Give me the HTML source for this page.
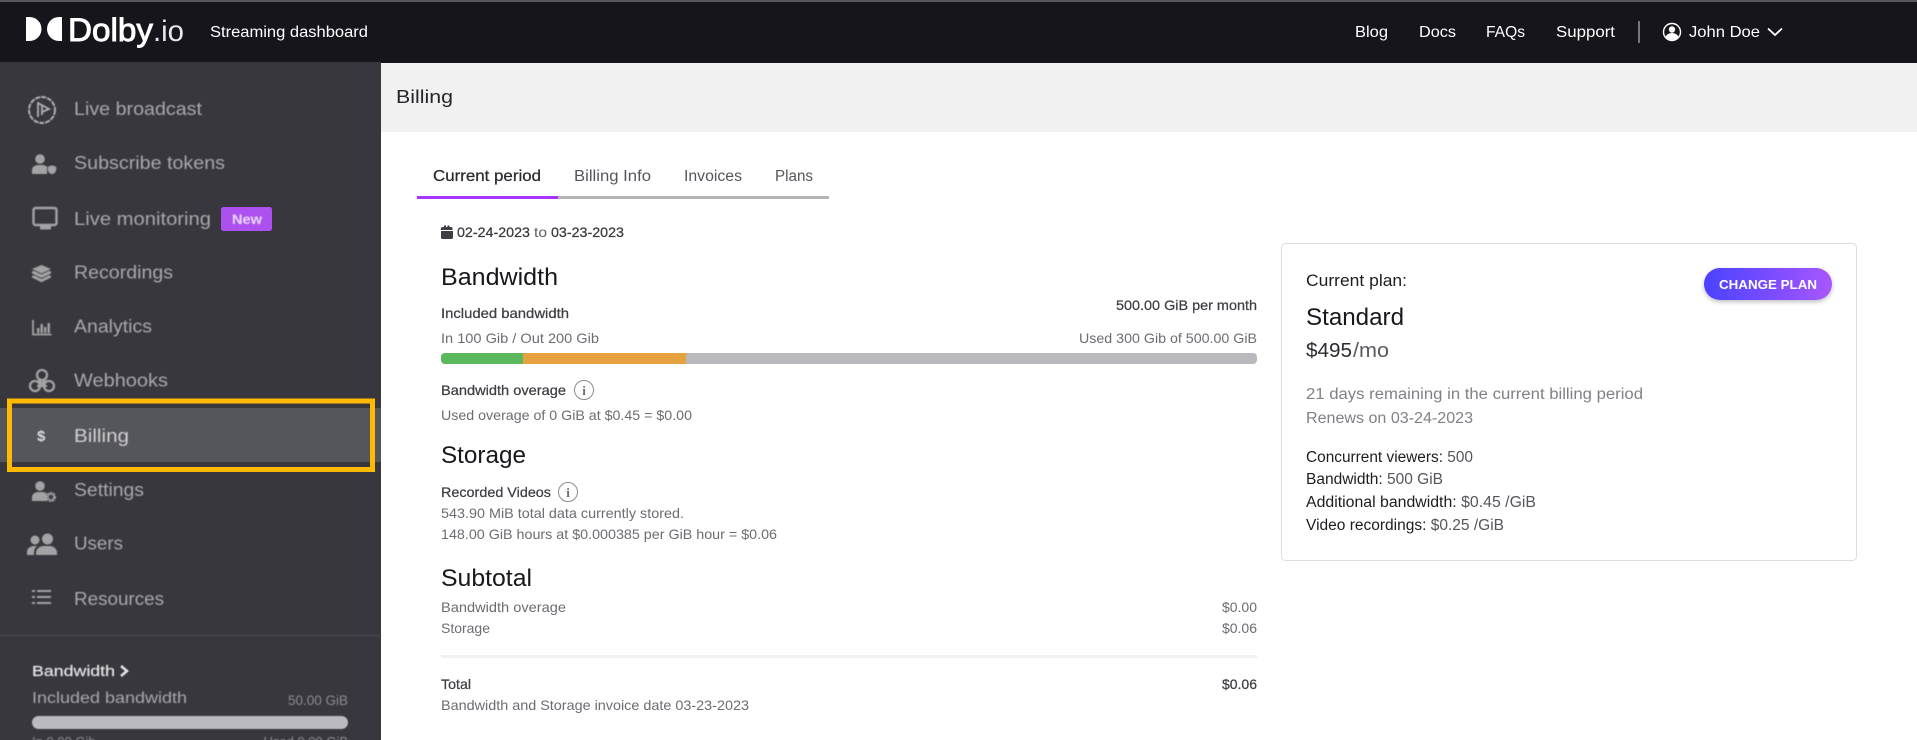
<!DOCTYPE html>
<html lang="en"><head><meta charset="utf-8"><title>Billing</title>
<style>
html,body{margin:0;padding:0;width:1917px;height:740px;overflow:hidden;background:#fff}
svg{display:block}
text{font-family:"Liberation Sans",sans-serif}
.nav text{font-size:18px;fill:#a8a7aa}
.hd text{font-size:16px;fill:#fff}
.body13{font-size:14px;fill:#6c6c72}
.med{font-size:14px;fill:#3e3e44;stroke:#3e3e44;stroke-width:.25}
.h2{font-size:24px;fill:#17171c}
.card{font-size:15.5px;fill:#1d1d22}
.val{fill:#55555b}
</style></head><body>
<svg width="1917" height="740" viewBox="0 0 1917 740" xmlns="http://www.w3.org/2000/svg">
<defs>
<linearGradient id="g" x1="0" x2="1" y1="0" y2="0"><stop offset="0" stop-color="#4a42ff"/><stop offset="1" stop-color="#a856ff"/></linearGradient>
<filter id="sh" x="-20%" y="-30%" width="140%" height="180%"><feDropShadow dx="0" dy="2" stdDeviation="2.5" flood-color="#000" flood-opacity=".25"/></filter>
<filter id="bl"><feGaussianBlur stdDeviation=".45"/></filter>
</defs>
<rect width="1917" height="740" fill="#fff"/>
<rect width="1917" height="63" fill="#15151b"/>
<rect width="1917" height="2" fill="#55555a"/>
<rect x="381" y="63" width="1536" height="69" fill="#f1f1f1"/>
<rect y="62" width="381" height="678" fill="#38373d"/>

<!-- logo -->
<path d="M26 17h3.500a12 12 0 0 1 0 24H26z M62 17h-3a12 12 0 0 0 0 24h3z" fill="#fff"/>
<text x="68" y="41" font-size="32" fill="#fff" stroke="#fff" stroke-width=".9" textLength="85" lengthAdjust="spacingAndGlyphs">Dolby</text>
<text x="153" y="41" font-size="30" fill="#e8e8ea" textLength="31" lengthAdjust="spacingAndGlyphs">.io</text>
<g class="hd">
<text x="210" y="37" style="font-size:15.500px" textLength="158" lengthAdjust="spacingAndGlyphs">Streaming dashboard</text>
<text x="1355" y="37" textLength="33" lengthAdjust="spacingAndGlyphs">Blog</text>
<text x="1419" y="37" textLength="37" lengthAdjust="spacingAndGlyphs">Docs</text>
<text x="1486" y="37" textLength="39" lengthAdjust="spacingAndGlyphs">FAQs</text>
<text x="1556" y="37" textLength="59" lengthAdjust="spacingAndGlyphs">Support</text>
<text x="1689" y="37" textLength="71" lengthAdjust="spacingAndGlyphs">John Doe</text>
</g>
<rect x="1638" y="21" width="2" height="22" fill="#77777b"/>
<circle cx="1672" cy="32" r="8.500" fill="none" stroke="#fff" stroke-width="1.400"/>
<circle cx="1672" cy="29.500" r="3.200" fill="#fff"/>
<path d="M1665.500 37.500a6.500 4.500 0 0 1 13 0a9 9 0 0 1-13 0z" fill="#fff"/>
<path d="M1768 28.500l7 6.500 7-6.500" fill="none" stroke="#fff" stroke-width="1.800"/>

<!-- page title -->
<text x="396" y="103" font-size="18" fill="#26262b" textLength="57" lengthAdjust="spacingAndGlyphs">Billing</text>

<!-- sidebar -->
<rect y="408" width="381" height="54" fill="#55565b"/>
<g filter="url(#bl)">
<g class="nav">
<text x="74" y="115" textLength="128" lengthAdjust="spacingAndGlyphs">Live broadcast</text>
<text x="74" y="169" textLength="151" lengthAdjust="spacingAndGlyphs">Subscribe tokens</text>
<text x="74" y="225" textLength="137" lengthAdjust="spacingAndGlyphs">Live monitoring</text>
<text x="74" y="278.500" textLength="99" lengthAdjust="spacingAndGlyphs">Recordings</text>
<text x="74" y="332.500" textLength="78" lengthAdjust="spacingAndGlyphs">Analytics</text>
<text x="74" y="386.500" textLength="94" lengthAdjust="spacingAndGlyphs">Webhooks</text>
<text x="74" y="442" textLength="55" lengthAdjust="spacingAndGlyphs" style="fill:#d0d0d3">Billing</text>
<text x="74" y="496" textLength="70" lengthAdjust="spacingAndGlyphs">Settings</text>
<text x="74" y="549.500" textLength="49" lengthAdjust="spacingAndGlyphs">Users</text>
<text x="74" y="605" textLength="90" lengthAdjust="spacingAndGlyphs">Resources</text>
</g>
<!-- live broadcast icon -->
<circle cx="42" cy="110" r="13" fill="none" stroke="#b0afb2" stroke-width="2" stroke-dasharray="5 1"/>
<path d="M38 102v15M38 103l11 6-7 3M42 105v10" fill="none" stroke="#b0afb2" stroke-width="1.800"/>
<!-- subscribe tokens -->
<g fill="#a3a2a5">
<circle cx="40" cy="159" r="4.800"/>
<path d="M32 174v-4a6 5 0 0 1 6-5h5a6 6 0 0 1 4 2v7z"/>
<path d="M47.500 166.500l4.500-1.500 4.500 1.500v3a5 5 0 0 1-4.500 5a5 5 0 0 1-4.500-5z" stroke="#38373d" stroke-width=".8"/>
</g>
<!-- monitor -->
<rect x="33.500" y="208" width="23" height="17" rx="2" fill="none" stroke="#a3a2a5" stroke-width="2.400"/>
<path d="M40 226h11v2.500a1 1 0 0 1-1 1h-9a1 1 0 0 1-1-1z" fill="#a3a2a5"/>
<!-- recordings -->
<g fill="#a3a2a5">
<path d="M41.500 265l9.500 4-9.500 4.500-9.500-4.500z"/>
<path d="M32 271.500l2-.8 7.500 3.800 7.500-3.800 2 .8v2l-9.500 4.500-9.500-4.500z"/>
<path d="M32 276l2-.8 7.500 3.800 7.500-3.800 2 .8v1.500l-9.500 4.700-9.500-4.700z"/>
</g>
<!-- analytics -->
<path d="M33 320v14.500h18.500" fill="none" stroke="#a3a2a5" stroke-width="1.800"/>
<path d="M37 328h2.400v5H37zM40.500 324h2.400v9h-2.400zM44 327h2.400v6H44zM47.500 323h2.400v10h-2.400z" fill="#a3a2a5"/>
<!-- webhooks -->
<g fill="none" stroke="#a3a2a5" stroke-width="2.300">
<circle cx="42" cy="375" r="5"/><circle cx="35" cy="386" r="5"/><circle cx="49" cy="386" r="5"/>
<path d="M38 378l5 8M46 378l-5 8M37 386h10"/>
</g>
<!-- dollar -->
<text x="37" y="441" font-size="15" font-weight="700" fill="#dcdcde">$</text>
<!-- settings -->
<g fill="#a3a2a5">
<circle cx="40" cy="486" r="4.800"/>
<path d="M32 501v-4a6 5 0 0 1 6-5h5a6 6 0 0 1 4 2v7z"/>
<circle cx="51" cy="497" r="3.500" fill="none" stroke="#a3a2a5" stroke-width="3" stroke-dasharray="2 .6"/>
</g>
<!-- users -->
<g fill="#a3a2a5">
<circle cx="35" cy="540" r="4.500"/><circle cx="47.500" cy="539" r="5.500"/>
<path d="M27 555v-3a7 6 0 0 1 7-6h3a8 8 0 0 0-3 6v3z"/>
<path d="M36 555v-3a8 7 0 0 1 8-6h7a8 7 0 0 1 6 6v3z"/>
</g>
<!-- resources -->
<path d="M32 591h3M37 591h14M32 597h3M37 597h14M32 603h3M37 603h14" stroke="#a3a2a5" stroke-width="2" fill="none"/>
<!-- footer -->
<rect y="635" width="381" height="1" fill="#4d4c52"/>
<text x="32" y="676" font-size="15" fill="#e6e6e8" stroke="#e6e6e8" stroke-width=".2" textLength="83" lengthAdjust="spacingAndGlyphs">Bandwidth</text>
<path d="M121 666l6 5-6 5" fill="none" stroke="#e6e6e8" stroke-width="2.500"/>
<text x="32" y="703" font-size="15.500" fill="#a8a7aa" textLength="155" lengthAdjust="spacingAndGlyphs">Included bandwidth</text>
<text x="348" y="705" font-size="13.500" fill="#8d8c90" text-anchor="end">50.00 GiB</text>
<rect x="32" y="716" width="316" height="13" rx="6.500" fill="#bbbac0"/>
<text x="32" y="746" font-size="13" fill="#8d8c90">In 0.00 Gib</text>
<text x="348" y="746" font-size="13" fill="#8d8c90" text-anchor="end">Used 0.00 GiB</text>
</g>
<rect x="221" y="207" width="51" height="24" rx="2.500" fill="#ad50f0"/>
<text x="232" y="224" font-size="14" font-weight="700" fill="#eadcfb" textLength="30" lengthAdjust="spacingAndGlyphs" filter="url(#bl)">New</text>
<rect x="9.500" y="401" width="363" height="68.500" fill="none" stroke="#ffb900" stroke-width="5"/>

<!-- tabs -->
<text x="433" y="181" font-size="16" fill="#2a2a2f" stroke="#2a2a2f" stroke-width=".25" textLength="108" lengthAdjust="spacingAndGlyphs">Current period</text>
<text x="574" y="181" font-size="15.500" fill="#55555c" textLength="77" lengthAdjust="spacingAndGlyphs">Billing Info</text>
<text x="684" y="181" font-size="15.500" fill="#55555c" textLength="58" lengthAdjust="spacingAndGlyphs">Invoices</text>
<text x="775" y="181" font-size="15.500" fill="#55555c" textLength="38" lengthAdjust="spacingAndGlyphs">Plans</text>
<rect x="558" y="196" width="271" height="3" fill="#b5b5b5"/>
<rect x="417" y="196" width="141" height="3" fill="#a933ff"/>

<!-- date -->
<path d="M441 228.500a1.500 1.500 0 0 1 1.500-1.500h1.500v-1.500h2v1.500h1.500v-1.500h2v1.500h1.500a1.500 1.500 0 0 1 1.500 1.500v1.500h-12zM441 231h12v6.500a1.500 1.500 0 0 1-1.500 1.500h-9a1.500 1.500 0 0 1-1.500-1.500z" fill="#3e3e44"/>
<text x="457" y="237" font-size="14" fill="#3a3a40" stroke="#3a3a40" stroke-width=".25" textLength="73" lengthAdjust="spacingAndGlyphs">02-24-2023</text>
<text x="534" y="237" font-size="14" fill="#5e5e65" textLength="13" lengthAdjust="spacingAndGlyphs">to</text>
<text x="551" y="237" font-size="14" fill="#3a3a40" stroke="#3a3a40" stroke-width=".25" textLength="73" lengthAdjust="spacingAndGlyphs">03-23-2023</text>

<!-- bandwidth -->
<text class="h2" x="441" y="285" textLength="117" lengthAdjust="spacingAndGlyphs">Bandwidth</text>
<text class="med" x="441" y="318" textLength="128" lengthAdjust="spacingAndGlyphs">Included bandwidth</text>
<text class="med" x="1116" y="310" textLength="141" lengthAdjust="spacingAndGlyphs">500.00 GiB per month</text>
<text class="body13" x="441" y="343" textLength="158" lengthAdjust="spacingAndGlyphs">In 100 Gib / Out 200 Gib</text>
<text class="body13" x="1079" y="343" textLength="178" lengthAdjust="spacingAndGlyphs">Used 300 Gib of 500.00 GiB</text>
<rect x="441" y="353" width="816" height="11" rx="4" fill="#b9b8bc"/>
<path d="M445 353h78v11h-78a4 4 0 0 1-4-4v-3a4 4 0 0 1 4-4z" fill="#5cb85c"/>
<rect x="523" y="353" width="163" height="11" fill="#e5a23f"/>
<text class="med" x="441" y="395" textLength="125" lengthAdjust="spacingAndGlyphs">Bandwidth overage</text>
<circle cx="584" cy="390" r="9.500" fill="none" stroke="#8b8b8f" stroke-width="1"/>
<text x="584" y="395" font-size="13" font-weight="700" fill="#6c6c72" text-anchor="middle" style="font-family:'Liberation Serif',serif">i</text>
<text class="body13" x="441" y="420" textLength="251" lengthAdjust="spacingAndGlyphs">Used overage of 0 GiB at $0.45 = $0.00</text>

<!-- storage -->
<text class="h2" x="441" y="463" textLength="85" lengthAdjust="spacingAndGlyphs">Storage</text>
<text class="med" x="441" y="497" textLength="110" lengthAdjust="spacingAndGlyphs">Recorded Videos</text>
<circle cx="568" cy="492" r="9.500" fill="none" stroke="#8b8b8f" stroke-width="1"/>
<text x="568" y="497" font-size="13" font-weight="700" fill="#6c6c72" text-anchor="middle" style="font-family:'Liberation Serif',serif">i</text>
<text class="body13" x="441" y="518" textLength="243" lengthAdjust="spacingAndGlyphs">543.90 MiB total data currently stored.</text>
<text class="body13" x="441" y="539" textLength="336" lengthAdjust="spacingAndGlyphs">148.00 GiB hours at $0.000385 per GiB hour = $0.06</text>

<!-- subtotal -->
<text class="h2" x="441" y="586" textLength="91" lengthAdjust="spacingAndGlyphs">Subtotal</text>
<text class="body13" x="441" y="612" textLength="125" lengthAdjust="spacingAndGlyphs">Bandwidth overage</text>
<text class="body13" x="441" y="633" textLength="49" lengthAdjust="spacingAndGlyphs">Storage</text>
<text class="body13" x="1257" y="612" text-anchor="end">$0.00</text>
<text class="body13" x="1257" y="633" text-anchor="end">$0.06</text>
<rect x="441" y="655" width="816" height="3" fill="#f1f1f1"/>
<text class="med" x="441" y="689" textLength="30" lengthAdjust="spacingAndGlyphs">Total</text>
<text class="med" x="1257" y="689" text-anchor="end">$0.06</text>
<text class="body13" x="441" y="710" textLength="308" lengthAdjust="spacingAndGlyphs">Bandwidth and Storage invoice date 03-23-2023</text>

<!-- card -->
<rect x="1281.500" y="243.500" width="575" height="317" rx="4" fill="#fff" stroke="#dedede"/>
<text x="1306" y="286" font-size="16.500" fill="#1d1d22" textLength="101" lengthAdjust="spacingAndGlyphs">Current plan:</text>
<text x="1306" y="325" font-size="24" fill="#17171c" textLength="98" lengthAdjust="spacingAndGlyphs">Standard</text>
<text x="1306" y="357" font-size="20" fill="#2a2a2f" textLength="46" lengthAdjust="spacingAndGlyphs">$495</text>
<text x="1353" y="357" font-size="20" fill="#5a5a60" textLength="36" lengthAdjust="spacingAndGlyphs">/mo</text>
<text x="1306" y="399" font-size="15.500" fill="#808086" textLength="337" lengthAdjust="spacingAndGlyphs">21 days remaining in the current billing period</text>
<text x="1306" y="423" font-size="15.500" fill="#808086" textLength="167" lengthAdjust="spacingAndGlyphs">Renews on 03-24-2023</text>
<text class="card" x="1306" y="462" textLength="167" lengthAdjust="spacingAndGlyphs">Concurrent viewers: <tspan class="val">500</tspan></text>
<text class="card" x="1306" y="484" textLength="137" lengthAdjust="spacingAndGlyphs">Bandwidth: <tspan class="val">500 GiB</tspan></text>
<text class="card" x="1306" y="507" textLength="230" lengthAdjust="spacingAndGlyphs">Additional bandwidth: <tspan class="val">$0.45 /GiB</tspan></text>
<text class="card" x="1306" y="530" textLength="198" lengthAdjust="spacingAndGlyphs">Video recordings: <tspan class="val">$0.25 /GiB</tspan></text>
<rect x="1704" y="268" width="128" height="32" rx="16" fill="url(#g)" filter="url(#sh)"/>
<text x="1719" y="289" font-size="13" font-weight="700" fill="#fff" textLength="98" lengthAdjust="spacingAndGlyphs">CHANGE PLAN</text>
</svg>
</body></html>
